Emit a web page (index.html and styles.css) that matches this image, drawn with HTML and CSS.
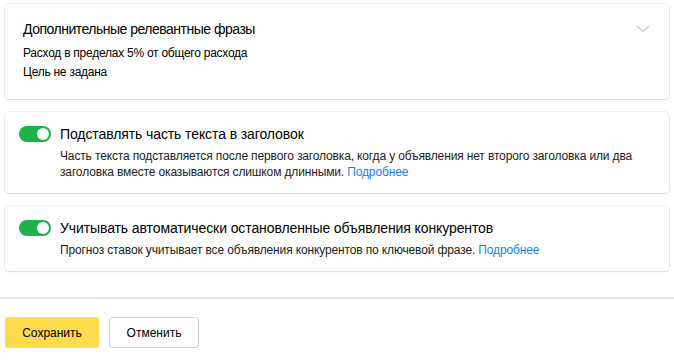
FILE: index.html
```html
<!DOCTYPE html>
<html lang="ru">
<head>
<meta charset="UTF-8">
<meta name="viewport" content="width=device-width, initial-scale=1.0">
<title>Настройки</title>
<link rel="stylesheet" href="styles.css">
</head>
<body>

<div class="settings">

  <!-- Additional phrases -->
  <section class="card card-collapse">
    <div class="card-body">
      <h3 class="card-title">Дополнительные релевантные фразы</h3>
      <p class="line">Расход в пределах 5% от общего расхода</p>
      <p class="line">Цель не задана</p>
    </div>
    <svg class="chevron" width="14" height="8" viewBox="0 0 14 8">
      <path d="M1 1l6 5.5L13 1" fill="none" stroke="#c8c8c8" stroke-width="1.2"/>
    </svg>
  </section>

  <!-- Title substitution -->
  <section class="card card-toggle">
    <span class="switch on"><span class="knob"></span></span>
    <div class="toggle-text">
      <h3 class="card-title">Подставлять часть текста в заголовок</h3>
      <p class="desc">Часть текста подставляется после первого заголовка, когда у объявления нет второго заголовка или два заголовка вместе оказываются слишком длинными. <a href="#">Подробнее</a></p>
    </div>
  </section>

  <!-- Competitors -->
  <section class="card card-toggle">
    <span class="switch on"><span class="knob"></span></span>
    <div class="toggle-text">
      <h3 class="card-title">Учитывать автоматически остановленные объявления конкурентов</h3>
      <p class="desc">Прогноз ставок учитывает все объявления конкурентов по ключевой фразе. <a href="#">Подробнее</a></p>
    </div>
  </section>

</div>

<div class="actions">
  <button class="btn btn-primary">Сохранить</button>
  <button class="btn btn-default">Отменить</button>
</div>

</body>
</html>
```

FILE: styles.css
```css
/* Reset */
* {
  margin: 0;
  padding: 0;
  box-sizing: border-box;
}
body {
  font-family: "Liberation Sans", Arial, sans-serif;
  color: #000;
  background: #fff;
  width: 674px;
}

/* Cards */
.settings {
  display: flex;
  flex-direction: column;
  gap: 13px;
  padding: 4px 5px 0 5px;
}
.card {
  background: #fff;
  border-radius: 4px;
  box-shadow: 0 0 0 1px rgba(0, 0, 0, 0.06), 0 1px 2px rgba(0, 0, 0, 0.1);
}
.card-title {
  font-size: 14px;
  font-weight: normal;
  line-height: 20px;
  letter-spacing: -0.1px;
  color: #000;
}

.card-collapse {
  position: relative;
  height: 95px;
  padding: 15px 18px;
}
.card-collapse .card-title {
  margin-bottom: 5px;
  letter-spacing: -0.5px;
}
.card-collapse .line {
  font-size: 12px;
  line-height: 19px;
  letter-spacing: -0.25px;
}
.chevron {
  position: absolute;
  top: 21px;
  right: 19px;
}

.card-toggle {
  display: flex;
  align-items: flex-start;
  gap: 9px;
  padding: 12px 14px 13px 14px;
}
.toggle-text .card-title {
  margin-bottom: 4px;
}
.desc {
  font-size: 12px;
  line-height: 16px;
  letter-spacing: -0.14px;
  color: #222;
}
.desc a {
  color: #1a7fe6;
  text-decoration: none;
}

/* Switch */
.switch {
  flex: none;
  width: 32px;
  height: 16px;
  margin-top: 2px;
  border-radius: 8px;
  background: #e0e0e0;
  position: relative;
}
.switch.on {
  background: #1fb14b;
}
.knob {
  position: absolute;
  top: 2px;
  left: 2px;
  width: 12px;
  height: 12px;
  border-radius: 50%;
  background: #fff;
}
.switch.on .knob {
  left: 18px;
}

/* Footer actions */
.actions {
  margin-top: 26px;
  border-top: 2px solid #e6e6e6;
  padding: 18px 5px;
  display: flex;
  gap: 10px;
}
.btn {
  font-family: inherit;
  font-size: 12px;
  height: 31px;
  border-radius: 3px;
  cursor: pointer;
  color: #000;
}
.btn-primary {
  width: 94px;
  background: #ffdb4d;
  border: none;
}
.btn-default {
  width: 90px;
  background: #fff;
  border: 1px solid #d0d0d0;
}
```
